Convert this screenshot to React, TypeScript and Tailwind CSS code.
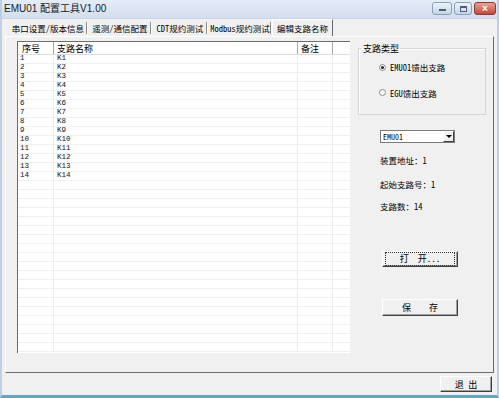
import React from 'react';

const mono = "font-['Noto_Sans_Mono_CJK_SC','Liberation_Mono','Noto_Sans_CJK_SC',monospace]";

const rows = Array.from({ length: 33 }, (_, i) => (i < 14 ? { no: String(i + 1), name: `K${i + 1}` } : { no: '', name: '' }));

const Btn3d = ({ label, focus, className = '' }: { label: string; focus?: boolean; className?: string }) => (
  <div
    className={`flex items-center justify-center bg-[#f0f0f0] border border-t-white border-l-white border-r-[#404040] border-b-[#404040] shadow-[inset_-1px_-1px_0_#a0a0a0] ${className}`}
  >
    <div
      className={`flex items-center justify-center w-full h-full m-[2px] ${focus ? 'border border-dotted border-[#303030]' : ''}`}
    >
      <span className={`text-[9px] leading-none text-black whitespace-pre ${mono}`}>{label}</span>
    </div>
  </div>
);

const Radio = ({ checked, label }: { checked?: boolean; label: string }) => (
  <div className="flex items-center gap-[4px]">
    <div className="w-[7px] h-[7px] rounded-full bg-white border border-[#8a8a8a] flex items-center justify-center">
      {checked && <div className="w-[3px] h-[3px] rounded-full bg-[#222]" />}
    </div>
    <span className={`text-[8.5px] leading-none text-black ${mono}`}>{label}</span>
  </div>
);

export default function App() {
  return (
    <div className="w-[499px] h-[398px] bg-[#f0f0f0] flex flex-col overflow-hidden border-l-[2px] border-r-[2px] border-b-[3px] border-l-[#bcd0e6] border-r-[#bcd0e6] border-b-[#5fa8c4]">
      {/* title bar */}
      <div className="h-[19px] flex items-center justify-between bg-gradient-to-b from-[#e4ecf6] to-[#d3dfee] border-b border-[#c5d4e6]">
        <span className="pl-[2px] text-[10px] leading-none text-[#1a1a1a] font-['Liberation_Sans','Noto_Sans_CJK_SC',sans-serif]">
          EMU01 配置工具V1.00
        </span>
        <div className="flex items-start self-start pt-[2px] pr-[1px] gap-[2px]">
          <div className="w-[20px] h-[13px] rounded-[3px] border border-[#8a9fb8] bg-gradient-to-b from-[#eef3f9] to-[#c6d4e6] flex items-center justify-center">
            <div className="w-[7px] h-[2px] bg-[#4c607a] mt-[3px]" />
          </div>
          <div className="w-[18px] h-[13px] rounded-[3px] border border-[#8a9fb8] bg-gradient-to-b from-[#eef3f9] to-[#c6d4e6] flex items-center justify-center">
            <div className="w-[7px] h-[6px] border border-[#4c607a] border-t-2" />
          </div>
          <div className="w-[22px] h-[13px] rounded-[3px] border border-[#8b3a34] bg-gradient-to-b from-[#e8a193] to-[#c4473a] flex items-center justify-center">
            <span className="text-[10px] leading-none font-bold text-white font-['Liberation_Sans',sans-serif]">×</span>
          </div>
        </div>
      </div>

      {/* client */}
      <div className="flex-1 flex flex-col px-[3px]">
        {/* tabs */}
        <div className={`h-[17px] flex items-end pl-[3px] text-[8.5px] leading-none text-black ${mono}`}>
          {[
            ['串口设置/版本信息', 'w-[80px]'],
            ['遥测/通信配置', 'w-[64px]'],
            ['CDT规约测试', 'w-[56px]'],
            ['Modbus规约测试', 'w-[64px]'],
          ].map(([t, w]) => (
            <div key={t} className={`${w} h-[16px] flex items-center justify-center relative`}>
              <span className="whitespace-nowrap">{t}</span>
              <div className="absolute right-0 top-[2px] h-[12px] w-[2px] border-l border-[#8a8a8a] border-r border-r-white" />
            </div>
          ))}
          <div className="w-[61px] h-[17px] flex items-center justify-center border-t border-l border-white border-r border-r-[#6a6a6a]">
            <span className="whitespace-nowrap">编辑支路名称</span>
          </div>
        </div>

        {/* panel */}
        <div className="h-[337px] flex border border-t-white border-l-white border-r-[#6a6a6a] border-b-[#6a6a6a] pl-[11px] pt-[4px]">
          {/* list */}
          <div className="w-[333px] h-[312px] bg-white border-l border-t border-[#6d6d6d] overflow-hidden">
            <div className={`h-[13px] flex border-b border-[#dcdcdc] text-[9px] leading-none ${mono}`}>
              <div className="w-[36px] border-r border-[#a8a8a8] flex items-center pl-[4px]">序号</div>
              <div className="w-[244px] border-r border-[#a8a8a8] flex items-center pl-[3px]">支路名称</div>
              <div className="w-[35px] border-r border-[#a8a8a8] flex items-center pl-[3px]">备注</div>
              <div className="w-[17px]" />
            </div>
            {rows.map((r, i) => (
              <div
                key={i}
                className="h-[9px] flex border-b border-[#f0f0f0] text-[7.5px] leading-none text-[#111] font-['Liberation_Mono',monospace]"
              >
                <div className="w-[36px] border-r border-[#ececec] flex items-center pl-[2px]">{r.no}</div>
                <div className="w-[244px] border-r border-[#ececec] flex items-center pl-[3px]">{r.name}</div>
                <div className="w-[35px] border-r border-[#ececec]" />
                <div className="w-[17px]" />
              </div>
            ))}
          </div>

          {/* right side */}
          <div className={`flex flex-col ml-[8px] text-black ${mono}`}>
            <fieldset className="w-[128px] h-[71px] mt-[3px] border border-[#d5d5d5] shadow-[inset_1px_1px_0_white] px-0 pb-0">
              <legend className="ml-[3px] px-[1px] text-[9px] leading-none">支路类型</legend>
              <div className="pl-[20px] pt-[10px] flex flex-col gap-[17px]">
                <Radio checked label="EMU01馈出支路" />
                <Radio label="EGU馈出支路" />
              </div>
            </fieldset>

            <div className="ml-[22px] mt-[15px] w-[75px] h-[13px] bg-white border border-[#7a7a7a] flex items-center justify-between">
              <span className="pl-[2px] text-[8px] leading-none">EMU01</span>
              <div className="w-[11px] h-[11px] bg-[#f0f0f0] border border-t-white border-l-white border-r-[#404040] border-b-[#404040] flex items-center justify-center">
                <div className="w-0 h-0 border-l-[3px] border-r-[3px] border-t-[3px] border-l-transparent border-r-transparent border-t-black" />
              </div>
            </div>

            <div className="ml-[22px] mt-[13px] text-[8.5px] leading-none">装置地址：1</div>
            <div className="ml-[22px] mt-[15px] text-[8.5px] leading-none">起始支路号：1</div>
            <div className="ml-[22px] mt-[14px] text-[8.5px] leading-none">支路数：14</div>

            <Btn3d label="打  开..." focus className="ml-[24px] mt-[40px] w-[76px] h-[16px]" />
            <Btn3d label="保    存" className="ml-[24px] mt-[32px] w-[76px] h-[17px]" />
          </div>
        </div>

        {/* bottom */}
        <div className="flex-1 flex items-start justify-end pt-[3px] pr-[2px]">
          <Btn3d label="退 出" className="w-[52px] h-[16px]" />
        </div>
      </div>
    </div>
  );
}
